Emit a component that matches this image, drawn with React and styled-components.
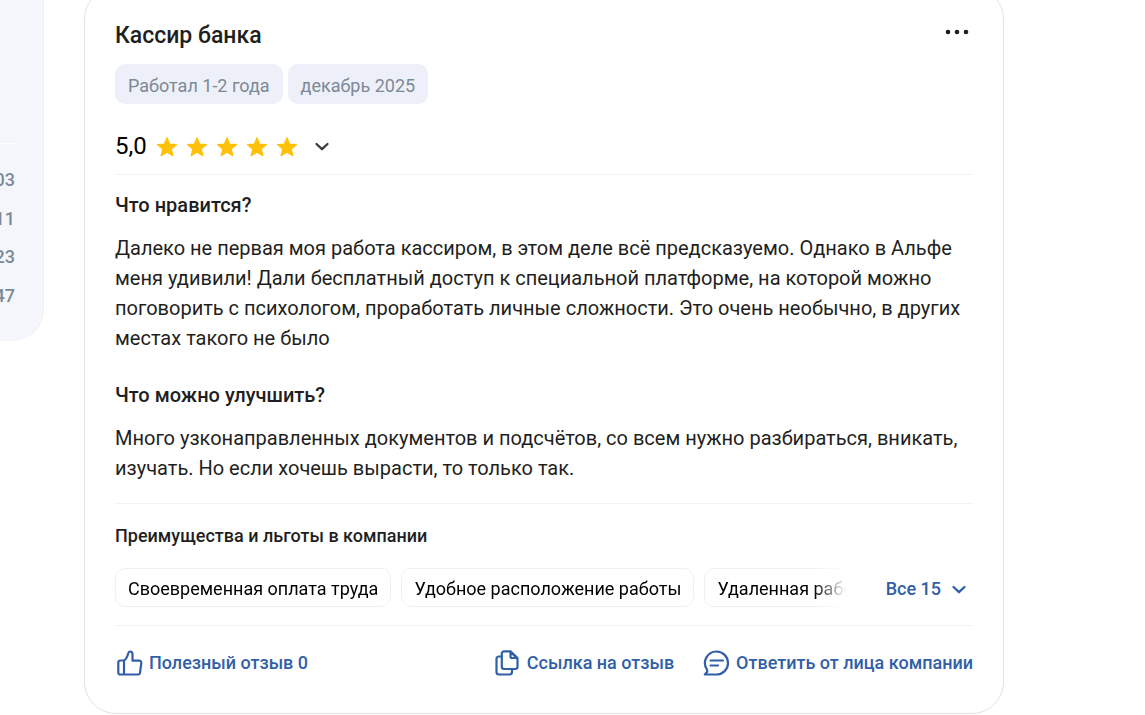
import React, { useState } from "react";
import styled, { createGlobalStyle } from "styled-components";

const GlobalStyle = createGlobalStyle`
  *, *::before, *::after {
    box-sizing: border-box;
  }

  html, body {
    margin: 0;
    overflow: hidden;
    background: #fff;
  }

  body {
    font-family: Roboto, "Noto Sans", sans-serif;
    font-size: 20px;
    color: #1f1f22;
  }

  h2, h3, h4, p, ul {
    margin: 0;
    padding: 0;
  }

  button {
    border: none;
    padding: 0;
    background: none;
    color: inherit;
    font: inherit;
    cursor: pointer;
  }
`;

const Page = styled.div`
  display: flex;
  align-items: flex-start;
  gap: 40px;
  padding-right: 141px;
  overflow: hidden;
`;

const Sidebar = styled.aside`
  flex: 0 0 44px;
  min-width: 0;
  padding: 143px 28px 26px 0;
  border-right: 1px solid #ededf3;
  border-radius: 0 0 32px 0;
  background: #f5f6fc;
`;

const RatingCounts = styled.ul`
  list-style: none;
  border-top: 1px solid #fff;
  padding-top: 17px;
`;

const RatingCount = styled.li`
  display: flex;
  justify-content: flex-end;
  height: 38px;
  margin-bottom: ${({ $spaced }) => ($spaced ? "1px" : "0")};
  line-height: 38px;
  font-size: 18px;
  font-weight: 500;
  color: #7c8997;
`;

const Card = styled.article`
  flex: 1;
  min-width: 0;
  margin-top: -13px;
  padding: 30px 30px 36px;
  border: 1px solid #dfe3eb;
  border-radius: 32px;
`;

const CardHeader = styled.header`
  display: flex;
  justify-content: space-between;
  align-items: flex-start;
`;

const Position = styled.h2`
  font-size: 23px;
  line-height: 36px;
  font-weight: 500;
`;

const MenuButton = styled.button`
  display: flex;
  padding: 11px 4px;
`;

const Chips = styled.div`
  display: flex;
  gap: 5px;
  margin-top: 10px;
`;

const Chip = styled.span`
  padding: 3px 13px 0;
  border-radius: 10px;
  background: #edf0f8;
  font-size: 18px;
  line-height: 37px;
  color: #7c8997;
`;

const Rating = styled.div`
  display: flex;
  align-items: center;
  height: 32px;
  margin-top: 26px;
`;

const Score = styled.span`
  font-size: 24px;
  line-height: 32px;
  color: #000;
`;

const Stars = styled.div`
  display: flex;
  gap: 8px;
  margin: 1px 16px 0 9px;
`;

const Toggle = styled.button`
  display: flex;
  color: #3c3c40;
`;

const Divider = styled.hr`
  height: 1px;
  margin: ${({ $top }) => $top}px 0 0;
  border: none;
  background: #f2f3f8;
`;

const Section = styled.section`
  margin-top: ${({ $top }) => $top}px;
`;

const Question = styled.h3`
  font-size: 20px;
  line-height: 30px;
  font-weight: 500;
`;

const Answer = styled.p`
  margin-top: 13px;
  font-size: 20px;
  line-height: 30px;
`;

const BenefitsTitle = styled.h4`
  font-size: 18px;
  line-height: 26px;
  font-weight: 500;
`;

const BenefitsRow = styled.div`
  display: flex;
  align-items: center;
  justify-content: space-between;
  gap: 40px;
  margin-top: 19px;
  padding-right: 6px;
`;

const Benefits = styled.ul`
  flex: 1;
  min-width: 0;
  display: flex;
  gap: 10px;
  overflow: hidden;
  list-style: none;
  mask-image: linear-gradient(to right, #000 calc(100% - 32px), transparent);
`;

const Benefit = styled.li`
  flex: none;
  padding: 2px 12px 0;
  border: 1px solid #eef0f8;
  border-radius: 10px;
  font-size: 18px;
  line-height: 35px;
  white-space: nowrap;
  color: #000;
`;

const ShowAll = styled.button`
  display: flex;
  align-items: center;
  gap: 10px;
  padding-top: 2px;
  font-size: 18px;
  line-height: 24px;
  font-weight: 500;
  white-space: nowrap;
  color: #315fa7;
`;

const Actions = styled.footer`
  display: flex;
  align-items: center;
  gap: 28px;
  margin-top: 23px;
`;

const Action = styled.button`
  display: flex;
  align-items: center;
  gap: 6px;
  margin-right: ${({ $pushRest }) => ($pushRest ? "auto" : "0")};
  font-size: 18px;
  line-height: 28px;
  font-weight: 500;
  white-space: nowrap;
  color: #315fa7;
`;

const StarIcon = () => (
  <svg width="22" height="22" viewBox="0 0 20 20" aria-hidden="true">
    <path
      d="M10 1.5 12.4 7.3 18.7 7.8 13.9 11.9 15.4 18 10 14.7 4.6 18 6.1 11.9 1.3 7.8 7.6 7.3Z"
      fill="#ffc107"
      stroke="#ffc107"
      strokeWidth="1"
      strokeLinejoin="round"
    />
  </svg>
);

const ChevronIcon = () => (
  <svg width="16" height="16" viewBox="0 0 16 16" fill="none" aria-hidden="true">
    <path
      d="M2.5 6 8 11.200l5.500-5.200"
      stroke="currentColor"
      strokeWidth="2.3"
      strokeLinecap="round"
      strokeLinejoin="round"
    />
  </svg>
);

const DotsIcon = () => (
  <svg width="24" height="6" viewBox="0 0 24 6" fill="currentColor" aria-hidden="true">
    <circle cx="3" cy="3" r="2.3" />
    <circle cx="12" cy="3" r="2.3" />
    <circle cx="21" cy="3" r="2.3" />
  </svg>
);

const iconProps = {
  width: 28,
  height: 28,
  viewBox: "0 0 28 28",
  fill: "none",
  stroke: "currentColor",
  strokeWidth: 2.2,
  strokeLinecap: "round",
  strokeLinejoin: "round",
  "aria-hidden": true,
};

const LikeIcon = () => (
  <svg {...iconProps}>
    <path d="M9 11.5H5.300a2 2 0 0 0-2 2V23.500a2 2 0 0 0 2 2H23a2 2 0 0 0 2-1.700l1.300-9.800a2 2 0 0 0-2-2.300H17.500V5.500c0-1.600-.8-3-2.300-3-.8 0-1.500.5-1.700 1.200C12.600 6.800 11.500 10.200 9 11.500V25.300" />
  </svg>
);

const CopyIcon = () => (
  <svg {...iconProps}>
    <path d="M17.500 2.300H11a2.200 2.200 0 0 0-2.200 2.200v13.300A2.200 2.200 0 0 0 11 20h11.300a2.200 2.200 0 0 0 2.200-2.200V9Z" />
    <path d="M17.500 3V7.500a1.500 1.500 0 0 0 1.500 1.500H24Z" />
    <path d="M8.300 7.500H6A2.500 2.500 0 0 0 3.500 10v13A2.500 2.500 0 0 0 6 25.500h10.500a2.500 2.500 0 0 0 2.500-2.500v-2.500" />
  </svg>
);

const CommentIcon = () => (
  <svg {...iconProps}>
    <path d="M14.500 2.500A11.500 11.500 0 1 1 14.500 25.500H2.800L5.300 22.800 5 20.500A11.500 11.500 0 0 1 14.500 2.500Z" />
    <path d="M8.500 11.500H21M8.500 16.500H16" />
  </svg>
);

const ratingCounts = ["03", "11", "23", "47"];

const benefits = [
  "Своевременная оплата труда",
  "Удобное расположение работы",
  "Удаленная работа",
];

const App = () => {
  const [expanded, setExpanded] = useState(false);

  return (
    <>
      <GlobalStyle />
      <Page>
        <Sidebar>
          <RatingCounts>
            {ratingCounts.map((count, i) => (
              <RatingCount key={count} $spaced={i % 2 === 0}>
                {count}
              </RatingCount>
            ))}
          </RatingCounts>
        </Sidebar>

        <Card>
          <CardHeader>
            <Position>Кассир банка</Position>
            <MenuButton type="button" aria-label="Меню">
              <DotsIcon />
            </MenuButton>
          </CardHeader>

          <Chips>
            <Chip>Работал 1-2 года</Chip>
            <Chip>декабрь 2025</Chip>
          </Chips>

          <Rating>
            <Score>5,0</Score>
            <Stars>
              {[1, 2, 3, 4, 5].map((n) => (
                <StarIcon key={n} />
              ))}
            </Stars>
            <Toggle
              type="button"
              aria-label="Подробнее об оценке"
              aria-expanded={expanded}
              onClick={() => setExpanded(!expanded)}
            >
              <ChevronIcon />
            </Toggle>
          </Rating>

          <Divider $top={12} />

          <Section $top={15}>
            <Question>Что нравится?</Question>
            <Answer>
              Далеко не первая моя работа кассиром, в этом деле всё предсказуемо.
              Однако в Альфе меня удивили! Дали бесплатный доступ к специальной
              платформе, на которой можно поговорить с психологом, проработать
              личные сложности. Это очень необычно, в других местах такого не
              было
            </Answer>
          </Section>

          <Section $top={27}>
            <Question>Что можно улучшить?</Question>
            <Answer>
              Много узконаправленных документов и подсчётов, со всем нужно
              разбираться, вникать, изучать. Но если хочешь вырасти, то только
              так.
            </Answer>
          </Section>

          <Divider $top={20} />

          <Section $top={19}>
            <BenefitsTitle>Преимущества и льготы в компании</BenefitsTitle>
            <BenefitsRow>
              <Benefits>
                {benefits.map((name) => (
                  <Benefit key={name}>{name}</Benefit>
                ))}
              </Benefits>
              <ShowAll type="button">
                Все 15
                <ChevronIcon />
              </ShowAll>
            </BenefitsRow>
          </Section>

          <Divider $top={18} />

          <Actions>
            <Action type="button" $pushRest>
              <LikeIcon />
              Полезный отзыв 0
            </Action>
            <Action type="button">
              <CopyIcon />
              Ссылка на отзыв
            </Action>
            <Action type="button">
              <CommentIcon />
              Ответить от лица компании
            </Action>
          </Actions>
        </Card>
      </Page>
    </>
  );
};

export default App;
